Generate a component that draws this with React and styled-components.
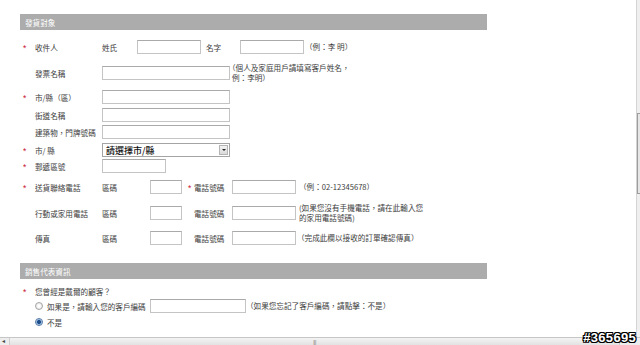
import React from "react";
import styled, { createGlobalStyle } from "styled-components";

const Global = createGlobalStyle`
  html, body { margin: 0; padding: 0; background: #fff; }
  body { font-family: "Noto Sans CJK TC", "Noto Sans", sans-serif; }
`;

const Screen = styled.div`
  position: relative;
  width: 640px;
  height: 345px;
  display: grid;
  grid-template-columns: 636px 4px;
  grid-template-rows: 337px 8px;
  overflow: hidden;
  background: #fff;
`;

const Content = styled.div`
  grid-column: 1;
  grid-row: 1;
  padding: 14px 0 0 20px;
  overflow: hidden;
`;

const Form = styled.div`
  width: 467px;
`;

const SectionBar = styled.div`
  height: 16px;
  margin-top: ${(p) => p.$mt || 0}px;
  background: #acacac;
  color: #fff;
  font-size: 7.6px;
  display: flex;
  align-items: center;
  padding-left: 5px;
`;

const Row = styled.div`
  display: flex;
  align-items: center;
  height: ${(p) => p.$h || 14}px;
  margin-top: ${(p) => p.$mt || 0}px;
  font-size: 7.6px;
  color: #3c3c3c;
  white-space: nowrap;
`;

const Star = styled.span`
  flex: none;
  width: ${(p) => p.$w || 15}px;
  padding-left: ${(p) => (p.$w ? 0 : 3)}px;
  box-sizing: border-box;
  color: #c8102e;
  font-size: 8.5px;
  font-family: "Liberation Sans", sans-serif;
  line-height: 1;
  position: relative;
  top: 1px;
`;

const Label = styled.span`
  flex: none;
  width: ${(p) => (p.$w ? `${p.$w}px` : "auto")};
  padding-left: ${(p) => p.$pl || 0}px;
  box-sizing: border-box;
`;

const Input = styled.span`
  flex: none;
  display: block;
  box-sizing: border-box;
  width: ${(p) => p.$w}px;
  height: 14px;
  margin-left: ${(p) => p.$ml || 0}px;
  border: 1px solid #c4c4c4;
  border-top-color: #aaaaaa;
  background: #fff;
`;

const Note = styled.span`
  flex: none;
  margin-left: ${(p) => p.$ml || 0}px;
  text-indent: ${(p) => p.$indent || 0}px;
  line-height: 10px;
  color: #3c3c3c;
`;

const Select = styled.div`
  flex: none;
  box-sizing: border-box;
  width: 128px;
  height: 14px;
  border: 1px solid #a4a4a4;
  display: flex;
  align-items: center;
  justify-content: space-between;
  padding: 0 1px 0 3px;
  font-size: 9px;
  font-weight: 500;
  color: #111;
`;

const DropButton = styled.span`
  width: 9px;
  height: 10px;
  box-sizing: border-box;
  border: 1px solid #b4b4b4;
  background: linear-gradient(#f4f4f4, #d9d9d9);
  display: flex;
  align-items: center;
  justify-content: center;
  &::after {
    content: "";
    border-left: 2px solid transparent;
    border-right: 2px solid transparent;
    border-top: 2px solid #222;
  }
`;

const Radio = styled.span`
  flex: none;
  width: 8px;
  height: 8px;
  box-sizing: border-box;
  border-radius: 50%;
  border: 1px solid ${(p) => (p.$checked ? "#4f77a6" : "#a6a6a6")};
  background: ${(p) =>
    p.$checked
      ? "radial-gradient(circle, #1f4e8c 0 1.6px, #7fa6d1 2.2px, #e3edf7 3.2px)"
      : "radial-gradient(circle, #ffffff 0 1px, #e1e1e1 3.5px)"};
  margin-right: 4px;
`;

const VScroll = styled.div`
  grid-column: 2;
  grid-row: 1;
  background: #efefef;
  border-left: 1px solid #d4d4d4;
  box-sizing: border-box;
  display: flex;
  flex-direction: column;
`;

const VThumb = styled.div`
  margin-top: 113px;
  height: 79px;
  border: 1px solid #9d9d9d;
  border-right: none;
  background: #e6e6e6;
`;

const HScroll = styled.div`
  grid-column: 1 / -1;
  grid-row: 2;
  background: #ededed;
  border-top: 1px solid #c6c6c6;
  box-sizing: border-box;
  display: flex;
  align-items: stretch;
`;

const HArrow = styled.span`
  width: 10px;
  flex: none;
  border-right: 1px solid #cfcfcf;
  font-size: 6px;
  line-height: 7px;
  color: #444;
  font-family: "Liberation Sans", sans-serif;
  padding-left: 2px;
  box-sizing: border-box;
`;

const HThumb = styled.span`
  flex: 1;
  background: linear-gradient(#f4f4f4, #e2e2e2);
  border-right: 1px solid #cfcfcf;
  display: flex;
  justify-content: center;
  align-items: center;
  font-size: 5px;
  color: #777;
  font-family: "Liberation Sans", sans-serif;
  letter-spacing: -0.5px;
`;

const HEnd = styled.span`
  width: 20px;
  flex: none;
`;

const Watermark = styled.div`
  position: absolute;
  right: 4px;
  bottom: 1px;
  font-family: "Liberation Sans", sans-serif;
  font-weight: bold;
  font-size: 13px;
  line-height: 13px;
  color: #fff;
  letter-spacing: 0.3px;
  text-shadow: -1px -1px 0 #000, 1px -1px 0 #000, -1px 1px 0 #000, 1px 1px 0 #000,
    0 1px 0 #000, 0 -1px 0 #000, 1px 0 0 #000, -1px 0 0 #000;
`;

const NoStar = () => <Star />;

export default function App() {
  return (
    <>
      <Global />
      <Screen>
        <Content>
          <Form>
            <SectionBar>發貨對象</SectionBar>

            <Row $mt={10}>
              <Star>*</Star>
              <Label $w={67}>收件人</Label>
              <Label $w={35}>姓氏</Label>
              <Input $w={64} />
              <Label $w={39} $pl={5}>名字</Label>
              <Input $w={64} />
              <Note $ml={1}>（例：李 明）</Note>
            </Row>

            <Row $mt={12}>
              <NoStar />
              <Label $w={67}>發票名稱</Label>
              <Input $w={128} />
              <Note $ml={2} $indent={-4}>
                （個人及家庭用戶請填寫客戶姓名，
                <br />
                例：李明）
              </Note>
            </Row>

            <Row $mt={10}>
              <Star>*</Star>
              <Label $w={67}>市/縣（區）</Label>
              <Input $w={128} />
            </Row>

            <Row $mt={4}>
              <NoStar />
              <Label $w={67}>街道名稱</Label>
              <Input $w={128} />
            </Row>

            <Row $mt={3}>
              <NoStar />
              <Label $w={67}>建築物，門牌號碼</Label>
              <Input $w={128} />
            </Row>

            <Row $mt={4}>
              <Star>*</Star>
              <Label $w={67}>市/ 縣</Label>
              <Select>
                <span>請選擇市/縣</span>
                <DropButton />
              </Select>
            </Row>

            <Row $mt={2}>
              <Star>*</Star>
              <Label $w={67}>郵遞區號</Label>
              <Input $w={64} />
            </Row>

            <Row $mt={7}>
              <Star>*</Star>
              <Label $w={67}>送貨聯絡電話</Label>
              <Label $w={48}>區碼</Label>
              <Input $w={32} />
              <Label $w={6} />
              <Star $w={6}>*</Star>
              <Label $w={38}>電話號碼</Label>
              <Input $w={64} />
              <Note $ml={3}>（例：02-12345678）</Note>
            </Row>

            <Row $mt={12}>
              <NoStar />
              <Label $w={67}>行動或家用電話</Label>
              <Label $w={48}>區碼</Label>
              <Input $w={32} />
              <Label $w={12} />
              <Label $w={38}>電話號碼</Label>
              <Input $w={64} />
              <Note $ml={3}>
                (如果您沒有手機電話，請在此輸入您
                <br />
                的家用電話號碼)
              </Note>
            </Row>

            <Row $mt={11}>
              <NoStar />
              <Label $w={67}>傳真</Label>
              <Label $w={48}>區碼</Label>
              <Input $w={32} />
              <Label $w={12} />
              <Label $w={38}>電話號碼</Label>
              <Input $w={64} />
              <Note $ml={1}>（完成此欄以接收的訂單確認傳真）</Note>
            </Row>

            <SectionBar $mt={18}>銷售代表資訊</SectionBar>

            <Row $mt={7} $h={10}>
              <Star>*</Star>
              <Label>您曾經是戴爾的顧客？</Label>
            </Row>

            <Row $mt={3}>
              <NoStar />
              <Radio />
              <Label $w={103}>如果是，請輸入您的客戶編碼</Label>
              <Input $w={96} />
              <Note $ml={0}>（如果您忘記了客戶編碼，請點擊：不是）</Note>
            </Row>

            <Row $mt={4} $h={10}>
              <NoStar />
              <Radio $checked />
              <Label>不是</Label>
            </Row>
          </Form>
        </Content>

        <VScroll>
          <VThumb />
        </VScroll>

        <HScroll>
          <HArrow>◂</HArrow>
          <HThumb>|||</HThumb>
          <HEnd />
        </HScroll>

        <Watermark>#365695</Watermark>
      </Screen>
    </>
  );
}
